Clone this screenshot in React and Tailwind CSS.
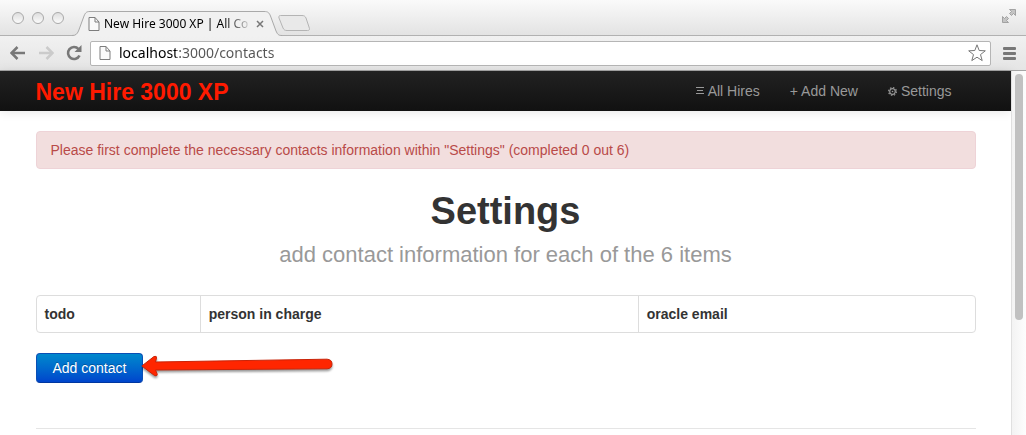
import React from "react";

function PageIcon({ className }) {
  return (
    <svg viewBox="0 0 12 14" className={className} aria-hidden="true">
      <path d="M1 .5h6l4 4.5v8.500H1z" fill="#fafafa" stroke="#7d7d7d" />
      <path d="M7 .5V5h4" fill="none" stroke="#7d7d7d" />
    </svg>
  );
}

function WindowButton({ label }) {
  return (
    <button
      aria-label={label}
      className="size-3 rounded-full border border-[#a9a9a9] bg-linear-to-b from-[#dedede] to-[#fbfbfb]"
    />
  );
}

function TabStrip() {
  return (
    <div className="relative flex h-9 items-end border-b border-[#b1b1b1] bg-linear-to-b from-[#fafafa] to-[#e3e3e3]">
      <div className="flex gap-2 self-center pl-3">
        <WindowButton label="Close window" />
        <WindowButton label="Minimize window" />
        <WindowButton label="Zoom window" />
      </div>
      <div className="relative -mb-px ml-2 h-[25px] w-[210px] shrink-0">
        <svg viewBox="0 0 210 25" className="absolute inset-0 size-full" aria-hidden="true">
          <path
            d="M0 24.500C4 24.500 5 23 6.500 20L12 5C13.500 1.500 14.500.5 18 .5H192C196 .5 197 1.500 198.500 5L204 20C205.500 23 206 24.500 210 24.500V25H0z"
            fill="#f1f1f1"
          />
          <path
            d="M0 24.500C4 24.500 5 23 6.500 20L12 5C13.500 1.500 14.500.5 18 .5H192C196 .5 197 1.500 198.500 5L204 20C205.500 23 206 24.500 210 24.500"
            fill="none"
            stroke="#a9a9a9"
          />
        </svg>
        <div className="relative flex h-full items-center pr-4 pl-4">
          <PageIcon className="h-3.5 w-3 shrink-0" />
          <span className="ml-1 bg-linear-to-r from-black from-80% to-[#ccc] bg-clip-text font-['Noto_Sans',sans-serif] text-xs whitespace-nowrap text-transparent">
            New Hire 3000 XP | All Co
          </span>
          <button aria-label="Close tab" className="ml-auto flex size-3 items-center justify-center">
            <svg viewBox="0 0 8 8" className="size-2" aria-hidden="true">
              <path d="M1 1l6 6M7 1L1 7" stroke="#777" strokeWidth="1.500" />
            </svg>
          </button>
        </div>
      </div>
      <button aria-label="New tab" className="mb-1 -ml-1 h-4 w-8">
        <svg viewBox="0 0 32 16" className="size-full" aria-hidden="true">
          <path
            d="M2.500.5H24C26 .5 27 1 28 3L31 12C32 14.500 31.500 15.500 29.500 15.500H9C7 15.500 6 15 5 13L1 3C.5 1.500 1 .5 2.500.5z"
            fill="#e9e9e9"
            stroke="#b4b4b4"
          />
        </svg>
      </button>
      <button aria-label="Full screen" className="mr-2.5 mb-3 ml-auto size-3.5">
        <svg viewBox="0 0 14 14" className="size-full" fill="#c4c4c4" stroke="#949494" strokeWidth=".8" aria-hidden="true">
          <path d="M7.500 .5h6v6L11.500 4.500 9.500 6.500 7.500 4.500 9.500 2.500z" />
          <path d="M.5 7.500v6h6L4.500 11.500 6.500 9.500 4.500 7.500 2.500 9.500z" />
        </svg>
      </button>
    </div>
  );
}

function Toolbar() {
  return (
    <div className="flex h-[35px] items-center border-b border-[#a5a5a5] bg-linear-to-b from-[#f1f1f1] to-[#e5e5e5] pr-2.5 pl-2.5">
      <button aria-label="Back">
        <svg viewBox="0 0 16 14" className="h-3.5 w-4" fill="none" stroke="#787878" aria-hidden="true">
          <path d="M2 7h13" strokeWidth="2.500" />
          <path d="M7.500 1L1.500 7l6 6" strokeWidth="2.500" />
        </svg>
      </button>
      <button aria-label="Forward" className="ml-3" disabled>
        <svg viewBox="0 0 16 14" className="h-3.5 w-4" fill="none" stroke="#cbcbcb" aria-hidden="true">
          <path d="M1 7h13" strokeWidth="2.500" />
          <path d="M8.500 1l6 6-6 6" strokeWidth="2.500" />
        </svg>
      </button>
      <button aria-label="Reload" className="ml-3">
        <svg viewBox="0 0 16 16" className="size-4" aria-hidden="true">
          <path d="M12.500 4A6 6 0 1 0 13.500 10.500" fill="none" stroke="#787878" strokeWidth="2.600" />
          <path d="M15.500 0v7H8.500z" fill="#787878" />
        </svg>
      </button>
      <div className="ml-2 flex h-[25px] flex-1 items-center rounded-xs border border-[#b5b5b5] bg-white pr-1 pl-2">
        <PageIcon className="h-3.5 w-3 shrink-0" />
        <input
          aria-label="Address"
          type="text"
          defaultValue="localhost:3000/contacts"
          className="ml-2 min-w-0 flex-1 bg-linear-to-r from-black from-[57px] to-[#555] to-[57px] bg-clip-text font-['Noto_Sans',sans-serif] text-sm text-transparent outline-none"
        />
        <button aria-label="Bookmark this page">
          <svg viewBox="0 0 18 18" className="size-[18px]" aria-hidden="true">
            <path
              d="M9 .8l2.200 5.700 6.100.3-4.800 3.800 1.700 6L9 13.200l-5.200 3.400 1.700-6L.7 6.800l6.100-.3z"
              fill="#fff"
              stroke="#777"
              strokeLinejoin="round"
            />
          </svg>
        </button>
      </div>
      <button aria-label="Menu" className="ml-3">
        <svg viewBox="0 0 13 13" className="size-[13px]" fill="#777" aria-hidden="true">
          <rect width="13" height="3" rx="1" />
          <rect y="5" width="13" height="3" rx="1" />
          <rect y="10" width="13" height="3" rx="1" />
        </svg>
      </button>
    </div>
  );
}

function Navbar() {
  return (
    <nav className="bg-linear-to-b from-[#222] to-[#111] shadow-[0_1px_10px_rgba(0,0,0,0.1)]">
      <div className="mx-auto flex h-10 max-w-[940px] items-center justify-between">
        <a href="#home" className="pt-0.5 text-[23px] leading-10 font-bold text-[#ff1a00]">
          New Hire 3000 XP
        </a>
        <div className="flex gap-[30px] pr-6 leading-5 text-[#999]">
          <a href="#hires" className="flex items-center gap-1">
            <svg viewBox="0 0 8 8" className="size-2" fill="#999" aria-hidden="true">
              <rect width="8" height="1" />
              <rect x="1" y="3" width="6" height="1" />
              <rect y="6" width="8" height="1" />
            </svg>
            All Hires
          </a>
          <a href="#new">+ Add New</a>
          <a href="#settings" className="flex items-center gap-1">
            <svg viewBox="0 0 9 9" className="size-[9px]" fill="none" stroke="#999" aria-hidden="true">
              <circle cx="4.500" cy="4.500" r="2.800" strokeWidth="1.200" />
              <circle cx="4.500" cy="4.500" r="3.900" strokeWidth="1.200" strokeDasharray="1.500 1.560" />
              <circle cx="4.500" cy="4.500" r=".8" fill="#999" stroke="none" />
            </svg>
            Settings
          </a>
        </div>
      </div>
    </nav>
  );
}

function Arrow() {
  return (
    <svg viewBox="0 0 196 26" className="absolute top-0.5 left-full -ml-0.5 h-[26px] w-[196px]" aria-hidden="true">
      <path
        d="M.8 11L13 1.500Q16 .500 15.500 3L14.500 7L186 4.200Q191 4.500 191 9T186 13.800L14.500 15L16 18.500Q17 21.500 13.500 20.500z"
        fill="#ff2600"
        stroke="#c92408"
        strokeLinejoin="round"
        className="drop-shadow-[0_2px_1px_rgba(0,0,0,0.4)]"
      />
    </svg>
  );
}

function SettingsPage() {
  return (
    <main className="mx-auto max-w-[940px] pt-5">
      <p role="alert" className="rounded border border-[#eed3d7] bg-[#f2dede] px-3.5 py-2 leading-5 text-[#b94a48]">
        Please first complete the necessary contacts information within "Settings" (completed 0 out 6)
      </p>
      <header className="pt-[22px] text-center">
        <h1 className="text-[38px] leading-10 font-bold text-[#333]">Settings</h1>
        <h2 className="mt-1 text-[22px] leading-10 text-[#999]">add contact information for each of the 6 items</h2>
      </header>
      <table className="mt-5 w-full table-fixed border-separate border-spacing-0 rounded border border-[#ddd] text-left leading-5 text-[#333]">
        <thead>
          <tr>
            <th className="w-[17.4%] p-2 font-bold">todo</th>
            <th className="w-[46.7%] border-l border-[#ddd] p-2 font-bold">person in charge</th>
            <th className="border-l border-[#ddd] p-2 font-bold">oracle email</th>
          </tr>
        </thead>
      </table>
      <div className="mt-5 flex">
        <div className="relative">
          <button className="rounded border border-[#0a4fb5] border-b-[#0037a0] bg-linear-to-b from-[#0088cc] to-[#0044cc] px-4 py-1 leading-5 text-white text-shadow-[0_-1px_0_rgba(0,0,0,0.25)]">
            Add contact
          </button>
          <Arrow />
        </div>
      </div>
      <hr className="mt-[45px] border-[#e5e5e5]" />
    </main>
  );
}

export default function App() {
  return (
    <div className="flex min-h-screen flex-col bg-white font-['Liberation_Sans',Arial,sans-serif] text-sm">
      <TabStrip />
      <Toolbar />
      <div className="flex flex-1">
        <div className="min-w-0 flex-1">
          <Navbar />
          <SettingsPage />
        </div>
        <div className="w-[15px] shrink-0 border-l border-[#e0e0e0] bg-linear-to-r from-[#f3f3f3] to-[#fdfdfd] pt-[3px] pl-[3px]">
          <div className="h-[246px] w-2 rounded-full bg-[#c1c1c1]" />
        </div>
      </div>
    </div>
  );
}
